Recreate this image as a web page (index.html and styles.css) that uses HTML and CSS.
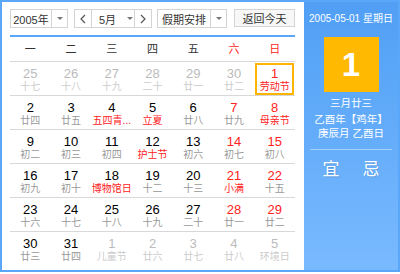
FILE: index.html
```html
<!DOCTYPE html>
<html lang="zh-CN">
<head>
  <meta charset="UTF-8" />
  <title>万年历</title>
  <link rel="stylesheet" href="styles.css">
</head>
<body>
  <div class="calendar">
    <div class="main">
      <div class="toolbar">
        <div class="select year">
          <span class="label">2005年</span>
          <span class="drop"><i class="caret"></i></span>
        </div>
        <div class="select month">
          <span class="nav"><svg width="6" height="10" viewBox="0 0 6 10"><polyline points="5,1 1,5 5,9" fill="none" stroke="#555" stroke-width="1.2"/></svg></span>
          <span class="label">5月<i class="caret"></i></span>
          <span class="nav"><svg width="6" height="10" viewBox="0 0 6 10"><polyline points="1,1 5,5 1,9" fill="none" stroke="#555" stroke-width="1.2"/></svg></span>
        </div>
        <div class="select holiday">
          <span class="label">假期安排</span>
          <span class="drop"><i class="caret"></i></span>
        </div>
        <button class="today-btn">返回今天</button>
      </div>

      <div class="weekdays">
        <span>一</span><span>二</span><span>三</span><span>四</span><span>五</span>
        <span class="red">六</span><span class="red">日</span>
      </div>

      <div class="days">
        <div class="week">
          <div class="day other"><b>25</b><i>十七</i></div>
          <div class="day other"><b>26</b><i>十八</i></div>
          <div class="day other"><b>27</b><i>十九</i></div>
          <div class="day other"><b>28</b><i>二十</i></div>
          <div class="day other"><b>29</b><i>廿一</i></div>
          <div class="day other"><b>30</b><i>廿二</i></div>
          <div class="day today weekend fest"><b>1</b><i>劳动节</i></div>
        </div>
        <div class="week">
          <div class="day"><b>2</b><i>廿四</i></div>
          <div class="day"><b>3</b><i>廿五</i></div>
          <div class="day fest"><b>4</b><i>五四青...</i></div>
          <div class="day fest"><b>5</b><i>立夏</i></div>
          <div class="day"><b>6</b><i>廿八</i></div>
          <div class="day weekend"><b>7</b><i>廿九</i></div>
          <div class="day weekend fest"><b>8</b><i>母亲节</i></div>
        </div>
        <div class="week">
          <div class="day"><b>9</b><i>初二</i></div>
          <div class="day"><b>10</b><i>初三</i></div>
          <div class="day"><b>11</b><i>初四</i></div>
          <div class="day fest"><b>12</b><i>护士节</i></div>
          <div class="day"><b>13</b><i>初六</i></div>
          <div class="day weekend"><b>14</b><i>初七</i></div>
          <div class="day weekend"><b>15</b><i>初八</i></div>
        </div>
        <div class="week">
          <div class="day"><b>16</b><i>初九</i></div>
          <div class="day"><b>17</b><i>初十</i></div>
          <div class="day fest"><b>18</b><i>博物馆日</i></div>
          <div class="day"><b>19</b><i>十二</i></div>
          <div class="day"><b>20</b><i>十三</i></div>
          <div class="day weekend fest"><b>21</b><i>小满</i></div>
          <div class="day weekend"><b>22</b><i>十五</i></div>
        </div>
        <div class="week">
          <div class="day"><b>23</b><i>十六</i></div>
          <div class="day"><b>24</b><i>十七</i></div>
          <div class="day"><b>25</b><i>十八</i></div>
          <div class="day"><b>26</b><i>十九</i></div>
          <div class="day"><b>27</b><i>二十</i></div>
          <div class="day weekend"><b>28</b><i>廿一</i></div>
          <div class="day weekend"><b>29</b><i>廿二</i></div>
        </div>
        <div class="week">
          <div class="day"><b>30</b><i>廿三</i></div>
          <div class="day"><b>31</b><i>廿四</i></div>
          <div class="day other"><b>1</b><i>儿童节</i></div>
          <div class="day other"><b>2</b><i>廿六</i></div>
          <div class="day other"><b>3</b><i>廿七</i></div>
          <div class="day other"><b>4</b><i>廿八</i></div>
          <div class="day other"><b>5</b><i>环境日</i></div>
        </div>
      </div>
    </div>

    <div class="side">
      <div class="side-date">2005-05-01 星期日</div>
      <div class="big-day">1</div>
      <div class="lunar first">三月廿三</div>
      <div class="lunar">乙酉年【鸡年】</div>
      <div class="lunar">庚辰月 乙酉日</div>
      <div class="divider"></div>
      <div class="yiji"><span>宜</span><span>忌</span></div>
    </div>
  </div>
</body>
</html>
```

FILE: styles.css
```css
body {
  margin: 0;
  background: #fff;
  font-family: "Liberation Sans", "Noto Sans CJK SC", sans-serif;
  color: #000;
}
.calendar {
  display: flex;
  width: 396px;
  height: 268px;
  border: 2px solid #5aa6f8;
}
.main {
  width: 285px;
  padding: 0 9px 0 8px;
}

/* toolbar */
.toolbar {
  display: flex;
  align-items: flex-start;
  height: 26px;
  padding-top: 7px;
  border-bottom: 2px solid #5aa6f8;
}
.select {
  display: flex;
  height: 19px;
  box-sizing: border-box;
  border: 1px solid #d4d4d4;
  background: #fff;
  font-size: 11px;
  color: #333;
}
.select .label {
  display: flex;
  align-items: center;
  justify-content: center;
}
.select .drop {
  display: flex;
  align-items: center;
  justify-content: center;
  border-left: 1px solid #d4d4d4;
}
.caret {
  display: inline-block;
  width: 0;
  height: 0;
  border-left: 3px solid transparent;
  border-right: 3px solid transparent;
  border-top: 3px solid #777;
}
.year {
  width: 58px;
  margin-right: 6px;
}
.year .label { width: 40px; }
.year .drop { flex: 1; }
.month {
  width: 78px;
  margin-right: 5px;
}
.month .nav {
  display: flex;
  align-items: center;
  justify-content: center;
  width: 16px;
}
.month .label {
  flex: 1;
  gap: 11px;
  border-left: 1px solid #d4d4d4;
  border-right: 1px solid #d4d4d4;
  padding-left: 6px;
}
.holiday {
  width: 70px;
  margin-right: 7px;
}
.holiday .label { width: 52px; }
.holiday .drop { flex: 1; }
.today-btn {
  width: 61px;
  height: 18px;
  padding: 0;
  border: 1px solid #d4d4d4;
  background: #f7f7f7;
  font-family: inherit;
  font-size: 11px;
  color: #333;
}

/* grid */
.weekdays {
  display: grid;
  grid-template-columns: repeat(7, 1fr);
  height: 24px;
  line-height: 24px;
  border-bottom: 1px solid #d8d8d8;
  font-size: 11px;
  color: #333;
  text-align: center;
}
.red { color: #f22; }
.week {
  display: grid;
  grid-template-columns: repeat(7, 1fr);
  height: 33px;
  border-bottom: 1px solid #d8d8d8;
}
.week:last-child { border-bottom: none; }
.day {
  padding-top: 4px;
  text-align: center;
  white-space: nowrap;
  overflow: hidden;
}
.day b {
  display: block;
  font-weight: normal;
  font-size: 13px;
  line-height: 15px;
}
.day i {
  display: block;
  font-style: normal;
  font-size: 10px;
  line-height: 12px;
  color: #999;
}
.day.weekend b { color: #f22; }
.day.fest i { color: #f22; }
.day.other b { color: #bbb; }
.day.other i { color: #ccc; }
.day.today {
  margin: 1px 1px 0 1px;
  padding-top: 3px;
  box-shadow: inset 0 0 0 2px #ffb400;
}

/* side panel */
.side {
  flex: 1;
  background: linear-gradient(#509ff5, #79baff);
  color: #fff;
  text-align: center;
}
.side-date {
  padding-top: 9px;
  font-size: 10px;
  line-height: 16px;
}
.big-day {
  width: 55px;
  height: 55px;
  margin: 10px auto 0;
  background: #ffb900;
  font-size: 33px;
  font-weight: bold;
  line-height: 55px;
}
.lunar {
  font-size: 10.5px;
  line-height: 14px;
}
.lunar.first {
  margin-top: 4px;
  margin-bottom: 2px;
}
.divider {
  height: 1px;
  margin: 9px 6px 0;
  background: #a6d0fc;
}
.yiji {
  display: flex;
  justify-content: center;
  gap: 23px;
  margin-top: 10px;
  font-size: 17px;
  line-height: 20px;
  text-shadow: 1px 1px 0 rgba(0, 0, 0, 0.12);
}
```
